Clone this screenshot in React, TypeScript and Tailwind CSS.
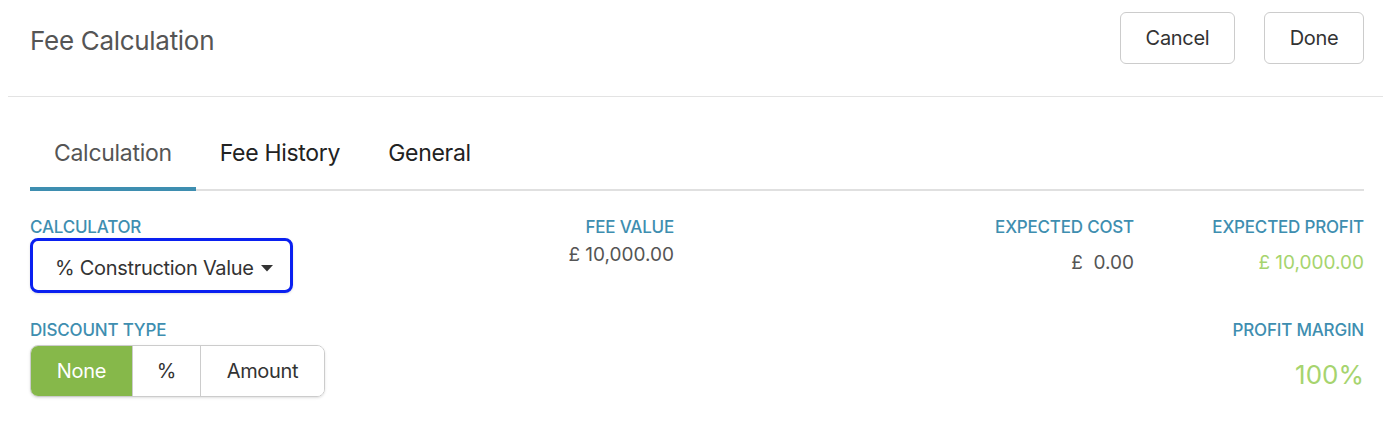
import React, { useState } from "react";

const label = "text-[17px] leading-[18px] uppercase text-[#3e8eb0] font-medium tracking-[-0.2px]";

function Caret() {
  return (
    <svg width="12" height="7" viewBox="0 0 12 7" className="ml-[7px] mt-[2px]">
      <path d="M0 0 L12 0 L6 6.5 Z" fill="#333" />
    </svg>
  );
}

export default function App() {
  const [tab, setTab] = useState("Calculation");
  const [discount, setDiscount] = useState("None");
  const tabs = ["Calculation", "Fee History", "General"];
  const discounts = [
    { name: "None", w: "w-[101px]" },
    { name: "%", w: "w-[68px]" },
    { name: "Amount", w: "w-[124px]" },
  ];

  return (
    <div className="w-[1400px] h-[444px] bg-white font-['Inter','Noto_Sans',sans-serif] text-[#555]">
      {/* header */}
      <div className="ml-2 w-[1375px] h-[97px] border-b border-[#e3e3e3] flex items-start justify-between pl-[22px] pr-[19px] pt-3">
        <h1 className="text-[26px] leading-[30px] mt-[14px] text-[#555] tracking-[-0.3px]">Fee Calculation</h1>
        <div className="flex gap-[29px]">
          <button className="w-[115px] h-[52px] rounded-md border border-[#ccc] text-[20px] text-[#333] tracking-[-0.3px]">Cancel</button>
          <button className="w-[100px] h-[52px] rounded-md border border-[#ccc] text-[20px] text-[#333] tracking-[-0.3px]">Done</button>
        </div>
      </div>

      <div className="px-[30px] w-[1394px]">
        {/* tabs */}
        <div className="mt-[22px] flex border-b-2 border-[#e0e0e0]">
          {tabs.map((t) => (
            <button
              key={t}
              onClick={() => setTab(t)}
              className={
                "-mb-[2px] px-[24px] pt-[20px] pb-[20px] text-[23px] leading-[28px] tracking-[-0.3px] border-b-4 " +
                (tab === t ? "border-[#3e8eb0] text-[#555]" : "border-transparent text-[#222]")
              }
            >
              {t}
            </button>
          ))}
        </div>

        {/* content */}
        <div className="grid grid-cols-[644px_1fr_230px] mt-[27px]">
          <div className="flex justify-between">
            <div>
              <div className={label}>Calculator</div>
              <button className="mt-[2px] w-[263px] h-[55px] rounded-lg border-[3px] border-[#0a20f0] shadow-sm flex items-center pl-[22px] pt-[4px] text-[20px] text-[#333] tracking-[-0.3px]">
                % Construction Value
                <Caret />
              </button>
            </div>
            <div className="text-right">
              <div className={label}>Fee Value</div>
              <div className="mt-[8px] text-[19px] leading-[22px] text-[#555]">£ 10,000.00</div>
            </div>
          </div>
          <div className="text-right">
            <div className={label}>Expected Cost</div>
            <div className="mt-[16px] text-[19px] leading-[22px] text-[#555]">£&nbsp;&nbsp;0.00</div>
          </div>
          <div className="text-right">
            <div className={label}>Expected Profit</div>
            <div className="mt-[16px] text-[19px] leading-[22px] text-[#a6d46e]">£ 10,000.00</div>
          </div>

          <div className="mt-[28px]">
            <div className={label}>Discount Type</div>
            <div className="mt-[6px] flex w-fit rounded-lg border border-[#ccc] overflow-hidden shadow-sm">
              {discounts.map((d, i) => (
                <button
                  key={d.name}
                  onClick={() => setDiscount(d.name)}
                  className={
                    d.w +
                    " h-[50px] text-[20px] tracking-[-0.3px] " +
                    (i > 0 ? "border-l border-[#ccc] " : "") +
                    (discount === d.name ? "bg-[#86b84a] text-white" : "bg-white text-[#333]")
                  }
                >
                  {d.name}
                </button>
              ))}
            </div>
          </div>
          <div />
          <div className="mt-[28px] text-right">
            <div className={label}>Profit Margin</div>
            <div className="mt-[20px] text-[26px] leading-[32px] text-[#a6d46e]">100%</div>
          </div>
        </div>
      </div>
    </div>
  );
}
